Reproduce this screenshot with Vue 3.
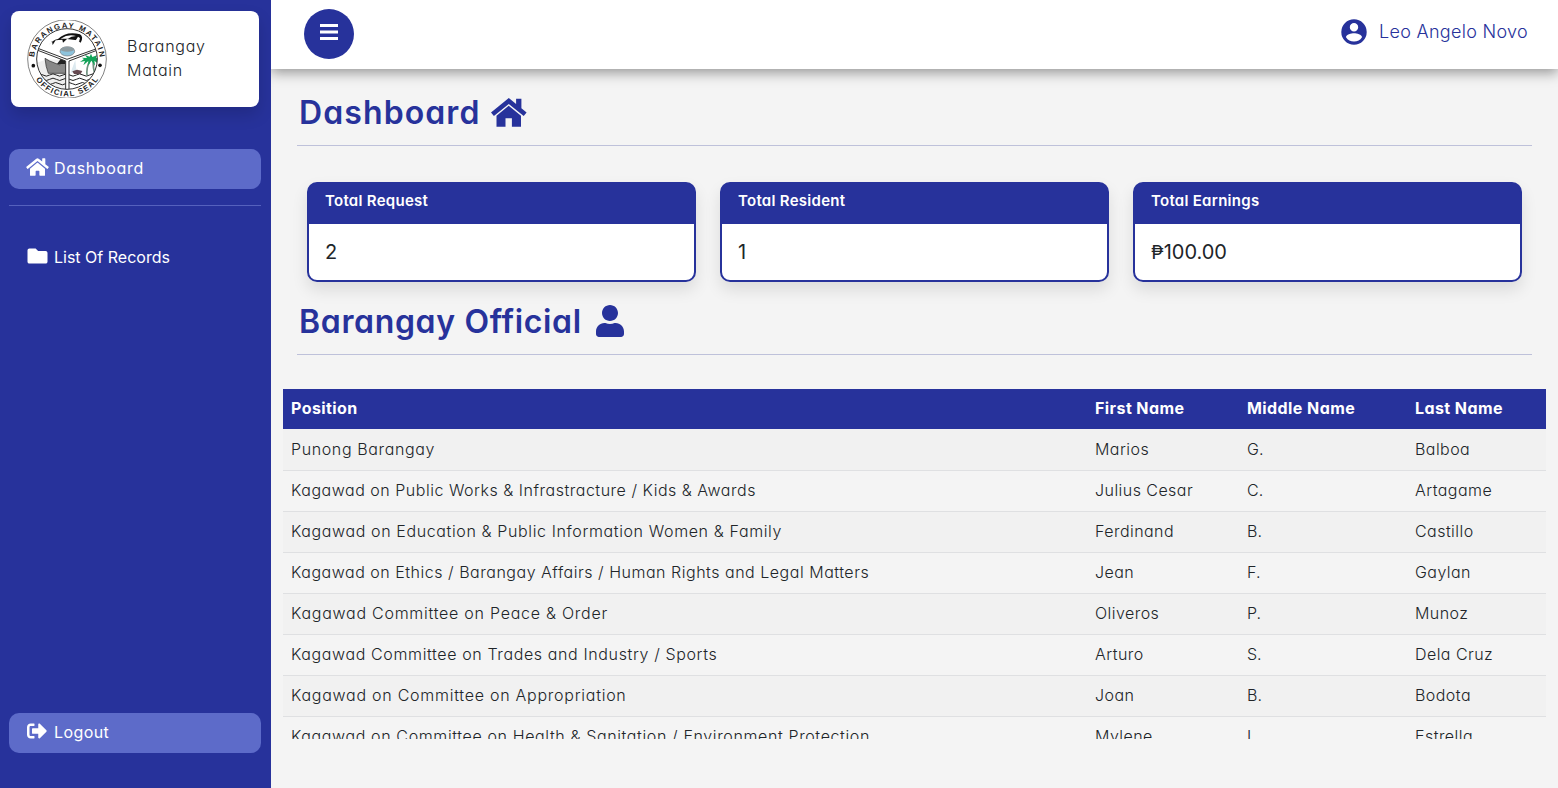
<script setup>
const cards = [
  { title: 'Total Request', value: '2' },
  { title: 'Total Resident', value: '1' },
  { title: 'Total Earnings', value: '100.00', peso: true },
]
const officials = [
  ['Punong Barangay', 'Marios', 'G.', 'Balboa'],
  ['Kagawad on Public Works & Infrastracture / Kids & Awards', 'Julius Cesar', 'C.', 'Artagame'],
  ['Kagawad on Education & Public Information Women & Family', 'Ferdinand', 'B.', 'Castillo'],
  ['Kagawad on Ethics / Barangay Affairs / Human Rights and Legal Matters', 'Jean', 'F.', 'Gaylan'],
  ['Kagawad Committee on Peace & Order', 'Oliveros', 'P.', 'Munoz'],
  ['Kagawad Committee on Trades and Industry / Sports', 'Arturo', 'S.', 'Dela Cruz'],
  ['Kagawad on Committee on Appropriation', 'Joan', 'B.', 'Bodota'],
  ['Kagawad on Committee on Health & Sanitation / Environment Protection', 'Mylene', 'L.', 'Estrella'],
]
</script>

<template>
  <div class="app">
    <aside class="sidebar">
      <div class="brand">
        <svg class="seal" viewBox="0 0 240 234">
          <defs>
            <path id="arc-top" d="M22 137a99 99 0 1 1 196 0" />
            <path id="arc-bottom" d="M8 117a112 112 0 0 0 224 0" />
            <clipPath id="disc"><circle cx="120" cy="117" r="91" /></clipPath>
          </defs>
          <circle cx="120" cy="117" r="118" fill="#fff" stroke="#444" stroke-width="2" />
          <g clip-path="url(#disc)">
            <path d="M30 128l30-10 60 2v90H30z" fill="#eee" />
            <g fill="none" stroke="#222" stroke-width="3">
              <path d="M28 165q10-7 20 0t20 0 20 0 20 0 20 0 20 0 20 0 20 0 20 0 20 0" />
              <path d="M28 178q10-7 20 0t20 0 20 0 20 0 20 0 20 0 20 0 20 0 20 0 20 0" />
              <path d="M36 191q10-7 20 0t20 0 20 0 20 0 20 0 20 0 20 0 20 0 20 0" />
            </g>
            <path d="M54 115l14 8 30 12 4-15h14v40H64q-8-20-10-45z" fill="#888" stroke="#222" stroke-width="2" />
            <path d="M90 132l11-15h5v-8l4 8h6v15z" fill="#222" />
            <path d="M30 84l90 34 92-33M30 90l86 33v87h10v-87l86-33" fill="#fff" stroke="#333" stroke-width="3" />
            <path d="M131 158q7-20 14-38 1 22 5 38z" fill="#dce9ef" />
            <path d="M136 154l14-5 16 4-5 9h-20z" fill="#654950" />
            <path d="M187 125q-9 18-7 41M199 123q-2 20 6 42" stroke="#6f927f" stroke-width="5" fill="none" />
            <path d="M159 126l12-9-7-4 16 1-6-9 14 5 4-9 4 10 14-5-3 8 12 2-9 5 6 13-14-12 2 15-11-15-9 15 0-14-15 13 5-13z" fill="#12a358" />
          </g>
          <circle cx="120" cy="117" r="91" fill="none" stroke="#333" stroke-width="3" />
          <ellipse cx="121" cy="94" rx="22" ry="14" fill="#8dc3dc" stroke="#777" stroke-width="2" />
          <ellipse cx="121" cy="88" rx="21" ry="7" fill="#8e9ba0" />
          <path d="M66 75q9-14 27-18 25-24 66-14 12 8 2 25l-11-7-30-4-12 11-2-9-20 2-9 14-2-11z" fill="#111" />
          <path d="M101 56q23-15 46-8-15 0-24 8zM145 63l8-13 6 4-3 12z" fill="#fff" />
          <circle cx="19" cy="137" r="5.5" fill="#111" /><circle cx="219" cy="136" r="5.5" fill="#111" />
          <g class="seal-text">
            <text textLength="288"><textPath href="#arc-top" startOffset="50%" text-anchor="middle">BARANGAY MATAIN</textPath></text>
            <text textLength="222"><textPath href="#arc-bottom" startOffset="50%" text-anchor="middle">OFFICIAL SEAL</textPath></text>
          </g>
        </svg>
        <span class="brand-name">Barangay<br>Matain</span>
      </div>
      <a class="nav active dash">
        <svg class="i-home" viewBox="0 0 576 512"><path d="M280.37 148.26L96 300.11V464a16 16 0 0 0 16 16l112.06-.29a16 16 0 0 0 15.92-16V368a16 16 0 0 1 16-16h64a16 16 0 0 1 16 16v95.64a16 16 0 0 0 16 16.05L464 480a16 16 0 0 0 16-16V300L295.67 148.26a12.19 12.19 0 0 0-15.3 0zM571.6 251.47L488 182.56V44.05a12 12 0 0 0-12-12h-56a12 12 0 0 0-12 12v72.61L318.47 43a48 48 0 0 0-61 0L4.34 251.47a12 12 0 0 0-1.6 16.9l25.5 31A12 12 0 0 0 45.15 301l235.22-193.74a12.19 12.19 0 0 1 15.3 0L530.9 301a12 12 0 0 0 16.9-1.6l25.5-31a12 12 0 0 0-1.7-16.93z" /></svg>
        <span class="t-dash">Dashboard</span>
      </a>
      <hr class="side-rule">
      <a class="nav records">
        <svg class="i-folder" viewBox="0 0 512 512"><path d="M464 128H272l-64-64H48C21.5 64 0 85.500 0 112v288c0 26.500 21.500 48 48 48h416c26.500 0 48-21.500 48-48V176c0-26.500-21.500-48-48-48z" /></svg>
        <span class="t-rec">List Of Records</span>
      </a>
      <a class="nav active logout">
        <svg class="i-out" viewBox="0 0 512 512"><path d="M497 273L329 441c-15 15-41 4.500-41-17v-96H152c-13.300 0-24-10.700-24-24v-96c0-13.300 10.700-24 24-24h136V88c0-21.400 25.900-32 41-17l168 168c9.300 9.400 9.300 24.600 0 34zM192 436v-40c0-6.600-5.400-12-12-12H96c-17.700 0-32-14.300-32-32V160c0-17.700 14.300-32 32-32h84c6.600 0 12-5.400 12-12V76c0-6.600-5.400-12-12-12H96c-53 0-96 43-96 96v192c0 53 43 96 96 96h84c6.600 0 12-5.400 12-12z" /></svg>
        <span class="t-out">Logout</span>
      </a>
    </aside>

    <div class="main">
      <header class="topbar">
        <button class="menu" aria-label="Menu">
          <svg viewBox="0 0 18 17"><path d="M0 0h18v3H0zM0 6.500h18v3H0zM0 13h18v3H0z" /></svg>
        </button>
        <div class="user">
          <svg viewBox="0 0 26 26"><path fill-rule="evenodd" d="M13 .3a12.700 12.700 0 1 0 0 25.400A12.700 12.700 0 0 0 13 .3zM13 4a4.200 4.200 0 1 1 0 8.400A4.200 4.200 0 0 1 13 4zm0 18.500a9.500 9.500 0 0 1-8-4.300c0-2.700 5.300-4 8-4s8 1.300 8 4a9.500 9.500 0 0 1-8 4.300z" /></svg>
          <span>Leo Angelo Novo</span>
        </div>
      </header>

      <h1 class="title first">
        <span class="t-h1">Dashboard</span>
        <svg class="h-home" viewBox="0 0 36 30"><path d="M17.700 7.800L5.500 17.800V28.700h9v-8.400h6.400v8.400H30V17.800zM17.800 0L0 14.600l2.900 3.500L17.800 6l14.900 12.100 2.900-3.500-5.200-4.300V.7h-5.300v5.400z" /></svg>
      </h1>

      <section class="cards">
        <article v-for="c in cards" :key="c.title" class="card">
          <header>{{ c.title }}</header>
          <div class="value"><span v-if="c.peso" class="peso">₱</span>{{ c.value }}</div>
        </article>
      </section>

      <h1 class="title second">
        <span class="t-h2">Barangay Official</span>
        <svg class="h-user" viewBox="0 0 448 512"><path d="M224 256c70.700 0 128-57.300 128-128S294.700 0 224 0 96 57.300 96 128s57.300 128 128 128zm89.600 32h-16.700c-22.200 10.200-46.900 16-72.900 16s-50.600-5.800-72.900-16h-16.700C60.200 288 0 348.200 0 422.400V464c0 26.500 21.500 48 48 48h352c26.500 0 48-21.500 48-48v-41.600c0-74.200-60.200-134.400-134.400-134.400z" /></svg>
      </h1>

      <div class="table-wrap">
        <table>
          <colgroup><col class="c1"><col class="c2"><col class="c3"><col class="c4"></colgroup>
          <thead><tr><th>Position</th><th>First Name</th><th>Middle Name</th><th>Last Name</th></tr></thead>
          <tbody>
            <tr v-for="row in officials" :key="row[0]"><td v-for="(cell, i) in row" :key="i">{{ cell }}</td></tr>
          </tbody>
        </table>
      </div>
    </div>
  </div>
</template>

<style>
body { margin: 0; overflow: hidden; }
</style>

<style scoped>
* { box-sizing: border-box; }
.app {
  display: flex;
  width: 100%;
  height: 788px;
  background: #f4f4f4;
  color: #212529;
  font: 300 16px/24px Inter, "Open Sans", sans-serif;
  font-feature-settings: "cv11";
}
svg { fill: currentColor; flex: none; display: block; }
.sidebar {
  width: 271px;
  flex: none;
  background: #27329b;
  display: flex;
  flex-direction: column;
  padding: 11px 10px 35px 9px;
  color: #fff;
}
.brand {
  margin: 0 2px;
  height: 96px;
  flex: none;
  background: #fff;
  border-radius: 8px;
  box-shadow: 0 8px 16px rgba(0, 0, 0, .15);
  display: flex;
  align-items: center;
  padding-left: 16px;
  color: #212529;
}
.seal { width: 80px; height: 78px; }
.seal-text { font: 700 23px "Liberation Sans", sans-serif; fill: #222; }
.brand-name { margin: -2px 0 0 20px; letter-spacing: .75px; }
.nav {
  height: 40px;
  flex: none;
  border-radius: 10px;
  display: flex;
  align-items: center;
  padding-left: 18px;
  font-weight: 400;
}
.active { background: #5d6bc9; }
.dash { margin-top: 42px; }
.side-rule { width: 100%; height: 1px; border: 0; background: #5561bd; margin: 16px 0 32px; flex: none; }
.logout { margin-top: auto; }
.nav span { line-height: 24px; margin-top: -2px; }
.t-dash { letter-spacing: .65px; }
.t-out { letter-spacing: .4px; }
.i-home { width: 23px; height: 20px; margin: -4px 5px 0 -1px; }
.i-folder { width: 21px; height: 20px; margin: -5px 6px 0 0; }
.i-out { width: 20px; height: 20px; margin: -5px 7px 0 0; }

.main { flex: 1; min-width: 0; display: flex; flex-direction: column; }
.topbar {
  height: 69px;
  flex: none;
  background: #fff;
  box-shadow: 0 4px 12px rgba(0, 0, 0, .38);
  clip-path: inset(0 0 -20px 0);
  display: flex;
  align-items: center;
  justify-content: space-between;
  padding: 0 30px 1px 33px;
}
.menu {
  width: 50px;
  height: 50px;
  border: 0;
  border-radius: 50%;
  background: #27329b;
  color: #fff;
  padding: 0 0 4px;
  display: flex;
  align-items: center;
  justify-content: center;
}
.menu svg { width: 18px; height: 17px; }
.user { display: flex; align-items: center; color: #27329b; font-size: 18px; padding-bottom: 5px; letter-spacing: .3px; }
.user svg { width: 26px; height: 26px; margin: 1px 12px 0 0; }

.title {
  margin: 0 26px;
  border-bottom: 1px solid #bec1da;
  color: #27329b;
  font-size: 32px;
  line-height: 48px;
  font-weight: 600;
  display: flex;
  align-items: center;
  padding-left: 2px;
  flex: none;
}
.first { height: 57px; margin-top: 20px; padding-bottom: 9px; }
.second { height: 54px; margin-top: 19px; padding-bottom: 12px; }
.t-h1 { letter-spacing: 1.1px; }
.t-h2 { letter-spacing: .66px; }
.h-home { width: 36px; height: 30px; margin: 0 0 0 10px; }
.h-user { width: 28px; height: 32px; margin: -2px 0 0 14px; }
.cards { display: grid; grid-template-columns: repeat(3, 1fr); gap: 24px; margin: 36px 36px 0; }
.card {
  height: 100px;
  border: 2px solid #27329b;
  border-radius: 10px;
  background: linear-gradient(#27329b 42px, #fff 42px) border-box;
  box-shadow: 0 8px 16px rgba(0, 0, 0, .1);
}
.card header { height: 40px; color: #fff; padding: 5px 16px; font-size: 15px; font-weight: 600; letter-spacing: .28px; }
.value { height: 56px; padding: 0 16px; line-height: 56px; font-size: 20px; font-weight: 400; }
.peso { font-size: 19px; }

.table-wrap { margin: 34px 12px 0; height: 350px; overflow: hidden; flex: none; }
table { width: 100%; border-collapse: collapse; table-layout: fixed; }
.c1 { width: 804px; }
.c2 { width: 152px; }
.c3 { width: 168px; }
th, td { text-align: left; padding: 0 8px; height: 41px; white-space: nowrap; }
th { height: 40px; background: #27329b; color: #fff; font-weight: 700; letter-spacing: .42px; padding-bottom: 2px; }
td { border-bottom: 1px solid #dfe0e2; letter-spacing: .45px; }
td:first-child { letter-spacing: .62px; }
td:nth-child(3) { letter-spacing: 0; }
tr:nth-child(n + 2) td { padding-bottom: 2px; }
tbody tr:nth-child(2n + 5) td:first-child { letter-spacing: .74px; }
tbody tr:nth-child(2) td:first-child,
tbody tr:nth-child(4) td:first-child { letter-spacing: .52px; }
tbody tr:nth-child(odd) { background: #f1f1f1; }
</style>
